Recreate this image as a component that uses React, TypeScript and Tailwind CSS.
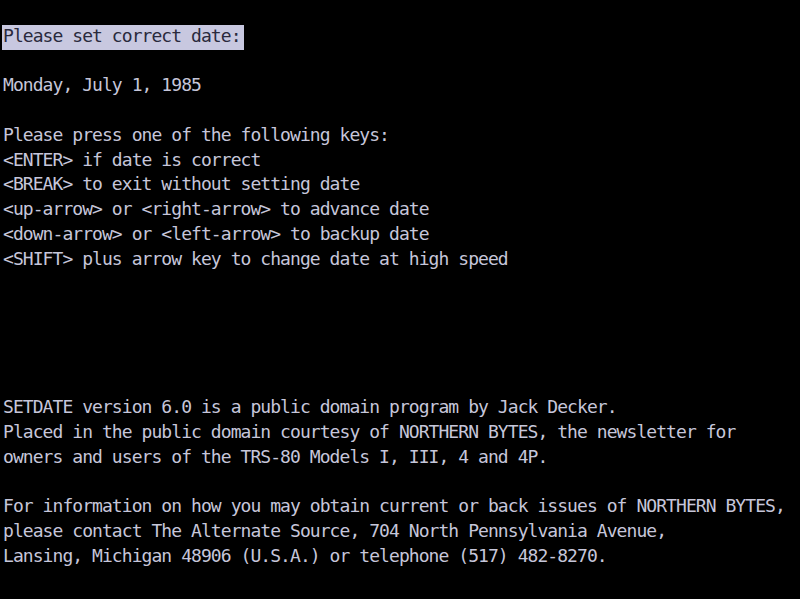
const rows: string[] = [
  "",
  "Please set correct date:",
  "",
  "Monday, July 1, 1985",
  "",
  "Please press one of the following keys:",
  "<ENTER> if date is correct",
  "<BREAK> to exit without setting date",
  "<up-arrow> or <right-arrow> to advance date",
  "<down-arrow> or <left-arrow> to backup date",
  "<SHIFT> plus arrow key to change date at high speed",
  "",
  "",
  "",
  "",
  "",
  "SETDATE version 6.0 is a public domain program by Jack Decker.",
  "Placed in the public domain courtesy of NORTHERN BYTES, the newsletter for",
  "owners and users of the TRS-80 Models I, III, 4 and 4P.",
  "",
  "For information on how you may obtain current or back issues of NORTHERN BYTES,",
  "please contact The Alternate Source, 704 North Pennsylvania Avenue,",
  "Lansing, Michigan 48906 (U.S.A.) or telephone (517) 482-8270.",
  "",
];

export default function App() {
  return (
    <div className="h-screen w-full overflow-hidden bg-black pl-[3px] font-['DejaVu_Sans_Mono',monospace] text-[18px] tracking-[-0.94px] text-[#c6c6da]">
      {rows.map((line, i) => (
        <div key={i} className="h-[24.75px] whitespace-pre leading-[21px]">
          {i === 1 ? (
            <span className="-ml-[1px] inline-block h-full bg-[#c8c8e0] pl-[1px] pr-[3px] align-top text-[#2a2a3c]">
              {line}
            </span>
          ) : (
            line
          )}
        </div>
      ))}
    </div>
  );
}
